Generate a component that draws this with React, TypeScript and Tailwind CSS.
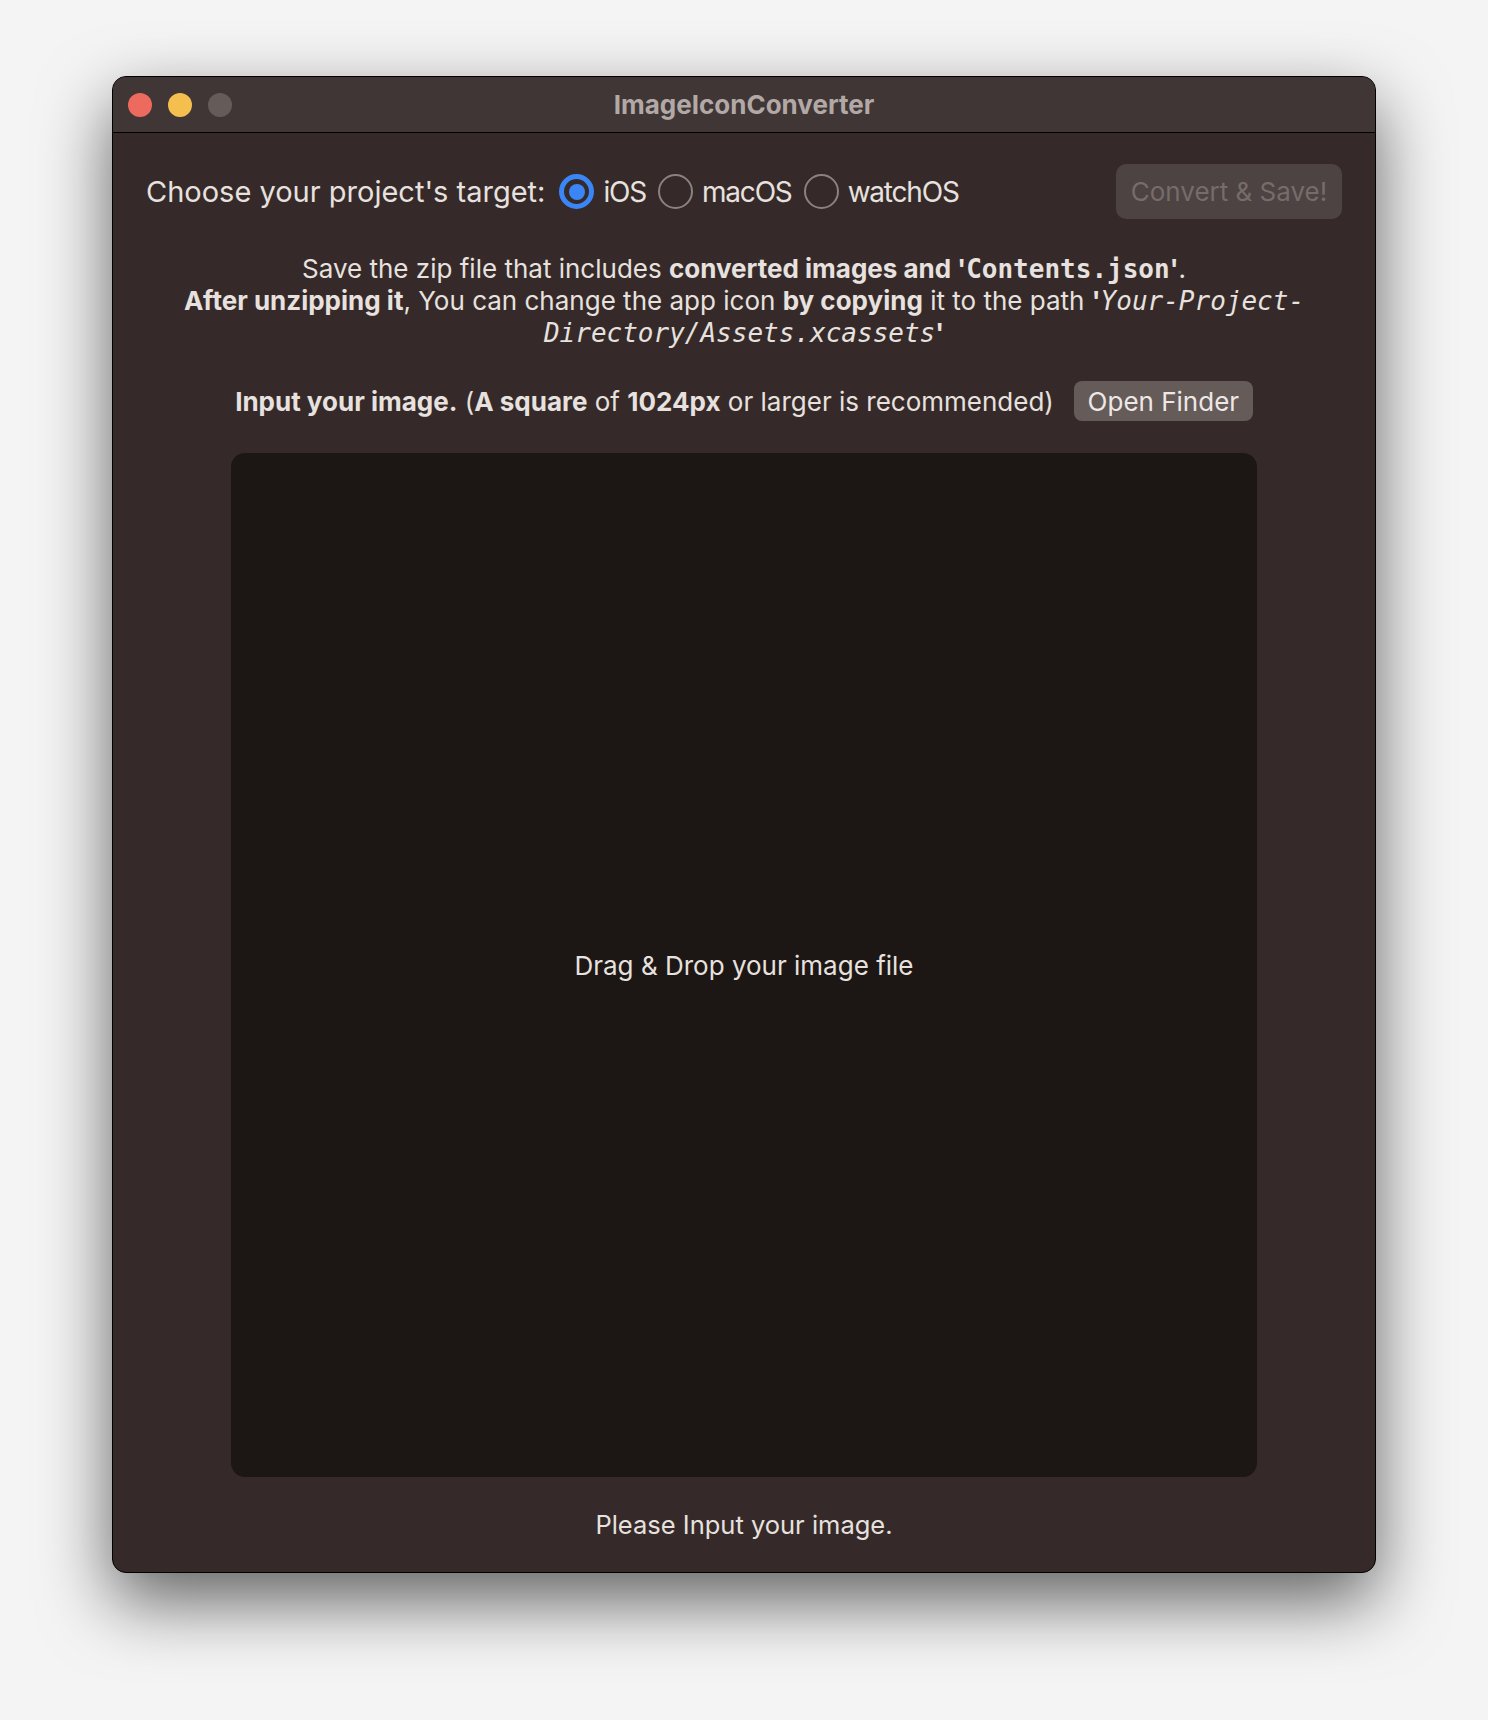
import React, { useState } from "react";

const targets = ["iOS", "macOS", "watchOS"];

const Radio = ({ checked }: { checked: boolean }) =>
  checked ? (
    <span className="flex h-[35px] w-[35px] items-center justify-center rounded-full border-[5px] border-[#3b86f7]">
      <span className="h-[16px] w-[16px] rounded-full bg-[#3b86f7]" />
    </span>
  ) : (
    <span className="h-[35px] w-[35px] rounded-full border-[2.5px] border-[#8a8280]" />
  );

const App = () => {
  const [target, setTarget] = useState("iOS");

  return (
    <div className="min-h-[1720px] bg-[#f4f4f4] pt-[76px] font-['Inter',sans-serif]">
      <div className="mx-auto w-[1264px] overflow-hidden rounded-[14px] border border-black bg-[#352a29] shadow-[0_28px_70px_rgba(0,0,0,0.6)]">
        {/* title bar */}
        <div className="relative flex h-[56px] items-center border-b border-black bg-[#403635] px-[15px]">
          <div className="flex gap-[16px]">
            <span className="h-[24px] w-[24px] rounded-full bg-[#ed6a5e]" />
            <span className="h-[24px] w-[24px] rounded-full bg-[#f4bf4f]" />
            <span className="h-[24px] w-[24px] rounded-full bg-[#655c5a]" />
          </div>
          <div className="absolute inset-0 flex items-center justify-center text-[26px] font-bold text-[#b2a9a7]">
            ImageIconConverter
          </div>
        </div>

        <div className="flex flex-col items-center px-[33px] pt-[31px] pb-[31px] text-[#e7e1df]">
          {/* target row */}
          <div className="flex h-[55px] w-full items-center justify-between">
            <div className="flex items-center text-[29px]">
              <span className="mr-[14px]">Choose your project's target:</span>
              {targets.map((t) => (
                <button
                  key={t}
                  onClick={() => setTarget(t)}
                  className="mr-[12px] flex items-center gap-[9px]"
                >
                  <Radio checked={target === t} />
                  <span className="text-[28px] tracking-[-1.2px]">{t}</span>
                </button>
              ))}
            </div>
            <button className="h-[55px] w-[226px] rounded-[10px] bg-[#4d4342] text-[26px] text-[#766c6a]">
              Convert &amp; Save!
            </button>
          </div>

          {/* description */}
          <p className="mt-[34px] text-center text-[26px] leading-[32px]">
            Save the zip file that includes <b>converted images and '<span className="font-['DejaVu_Sans_Mono',monospace]">Contents.json</span>'</b>.
            <br />
            <b>After unzipping it</b>, You can change the app icon <b>by copying</b> it to the path <b>'</b>
            <i className="font-['DejaVu_Sans_Mono',monospace]">Your-Project-</i>
            <br />
            <i className="font-['DejaVu_Sans_Mono',monospace]">Directory/Assets.xcassets</i>
            <b>'</b>
          </p>

          {/* input row */}
          <div className="mt-[32px] flex h-[40px] items-center gap-[20px] text-[26px]">
            <span>
              <b>Input your image.</b> (<b>A square</b> of <b>1024px</b> or larger is recommended)
            </span>
            <button className="h-[40px] w-[179px] rounded-[8px] bg-[#655b59] text-[26px] text-[#ede7e5]">
              Open Finder
            </button>
          </div>

          {/* drop zone */}
          <div className="mt-[32px] flex h-[1024px] w-[1026px] items-center justify-center rounded-[14px] bg-[#1c1715] text-[26px]">
            Drag &amp; Drop your image file
          </div>

          <div className="mt-[32px] text-[25.5px] leading-[32px]">Please Input your image.</div>
        </div>
      </div>
    </div>
  );
};

export default App;
